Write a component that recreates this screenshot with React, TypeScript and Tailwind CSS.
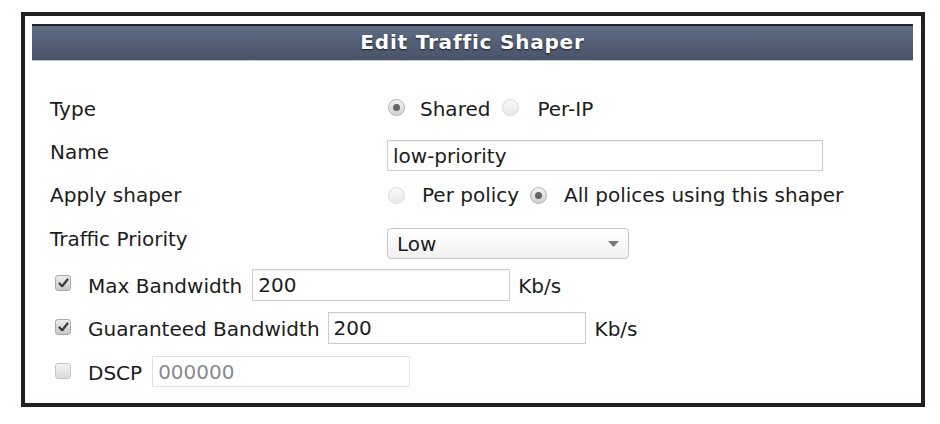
const font = { fontFamily: '"DejaVu Sans", Verdana, sans-serif' };

function Radio({ checked }: { checked?: boolean }) {
  return (
    <span
      className={`flex h-[17px] w-[17px] shrink-0 items-center justify-center rounded-full border ${
        checked
          ? 'border-[#b0b0b0] bg-gradient-to-b from-[#f2f2f2] to-[#d2d2d2]'
          : 'border-[#dadada] bg-gradient-to-b from-[#fafafa] to-[#e8e8e8]'
      }`}
    >
      {checked && <span className="h-[7px] w-[7px] rounded-full bg-[#666]" />}
    </span>
  );
}

function Checkbox({ checked }: { checked?: boolean }) {
  return (
    <span
      className={`flex h-[16px] w-[16px] shrink-0 items-center justify-center rounded-[3px] border ${
        checked
          ? 'border-[#a9a9a9] bg-gradient-to-b from-[#ececec] to-[#c9c9c9]'
          : 'border-[#c4c4c4] bg-gradient-to-b from-[#f3f3f3] to-[#dadada]'
      }`}
    >
      {checked && (
        <svg width="11" height="10" viewBox="0 0 11 10">
          <path d="M1.5 5.5 L4.2 8.2 L9.5 1.5" fill="none" stroke="#3a3a3a" strokeWidth="2.2" strokeLinecap="round" strokeLinejoin="round" />
        </svg>
      )}
    </span>
  );
}

function TextBox({ value, width, muted }: { value: string; width: string; muted?: boolean }) {
  return (
    <input
      readOnly
      value={value}
      className={`h-full ${width} border bg-white px-[5px] outline-none ${
        muted ? 'border-[#e2e2e2] text-[#878a8f]' : 'border-[#cdcdcd] text-[#1c1c1c] shadow-[inset_0_1px_1px_rgba(0,0,0,0.06)]'
      }`}
    />
  );
}

export default function App() {
  return (
    <div className="min-h-[424px] bg-white pt-[12px] pl-[21px]" style={font}>
      <div className="h-[395px] w-[904px] border-4 border-[#231f20] px-[7px] pt-[8px] pr-[8px]">
        {/* Header */}
        <div className="flex h-[37px] items-center justify-center border-t-2 border-b border-t-[#23262d] border-b-[#bccad8] bg-gradient-to-b from-[#606d85] to-[#4a5368]">
          <span className="-mt-[3px] text-[20px] font-bold tracking-[0.8px] text-white [text-shadow:0_1px_2px_rgba(0,0,0,0.7)]">
            Edit Traffic Shaper
          </span>
        </div>

        {/* Form */}
        <div className="pl-[18px] text-[20px] leading-[24px] text-[#1c1c1c]">
          {/* Type */}
          <div className="mt-[32px] flex h-[32px] items-center">
            <div className="w-[337px]">Type</div>
            <div className="ml-[1px] mb-[4px]"><Radio checked /></div>
            <span className="ml-[15px]">Shared</span>
            <div className="ml-[12px] mb-[4px]"><Radio /></div>
            <span className="ml-[18px]">Per-IP</span>
          </div>

          {/* Name */}
          <div className="mt-[14px] flex h-[33px] items-start">
            <div className="w-[337px] pt-[1px]">Name</div>
            <div className="mt-[1px] h-[31px]">
              <TextBox value="low-priority" width="w-[436px]" />
            </div>
          </div>

          {/* Apply shaper */}
          <div className="mt-[11px] flex h-[24px] items-center">
            <div className="w-[337px]">Apply shaper</div>
            <div className="ml-[1px]"><Radio /></div>
            <span className="ml-[17px]">Per policy</span>
            <div className="ml-[11px]"><Radio checked /></div>
            <span className="ml-[17px]">All polices using this shaper</span>
          </div>

          {/* Traffic Priority */}
          <div className="mt-[19px] flex h-[33px] items-start">
            <div className="w-[337px] pt-[1px]">Traffic Priority</div>
            <div className="mt-[2px] flex h-[31px] w-[242px] items-center justify-between rounded-[4px] border border-[#c6c6c6] bg-gradient-to-b from-white to-[#f1f1f1] pl-[9px] pr-[9px]">
              <span>Low</span>
              <svg width="11" height="6" viewBox="0 0 11 6">
                <path d="M0 0 H11 L5.5 6 Z" fill="#7a7a7a" />
              </svg>
            </div>
          </div>

          {/* Max Bandwidth */}
          <div className="mt-[10px] flex h-[32px] items-center pl-[5px]">
            <div className="mb-[4px]"><Checkbox checked /></div>
            <span className="ml-[17px] pt-[2px]">Max Bandwidth</span>
            <div className="ml-[10px] h-full">
              <TextBox value="200" width="w-[258px]" />
            </div>
            <span className="ml-[8px] pt-[2px]">Kb/s</span>
          </div>

          {/* Guaranteed Bandwidth */}
          <div className="mt-[11px] flex h-[32px] items-center pl-[5px]">
            <div className="mb-[2px]"><Checkbox checked /></div>
            <span className="ml-[17px] pt-[2px]">Guaranteed Bandwidth</span>
            <div className="ml-[8px] h-full">
              <TextBox value="200" width="w-[258px]" />
            </div>
            <span className="ml-[9px] pt-[2px]">Kb/s</span>
          </div>

          {/* DSCP */}
          <div className="mt-[12px] flex h-[31px] items-center pl-[5px]">
            <div className="mb-[2px]"><Checkbox /></div>
            <span className="ml-[17px] pt-[2px]">DSCP</span>
            <div className="ml-[10px] h-full">
              <TextBox value="000000" width="w-[258px]" muted />
            </div>
          </div>
        </div>
      </div>
    </div>
  );
}
